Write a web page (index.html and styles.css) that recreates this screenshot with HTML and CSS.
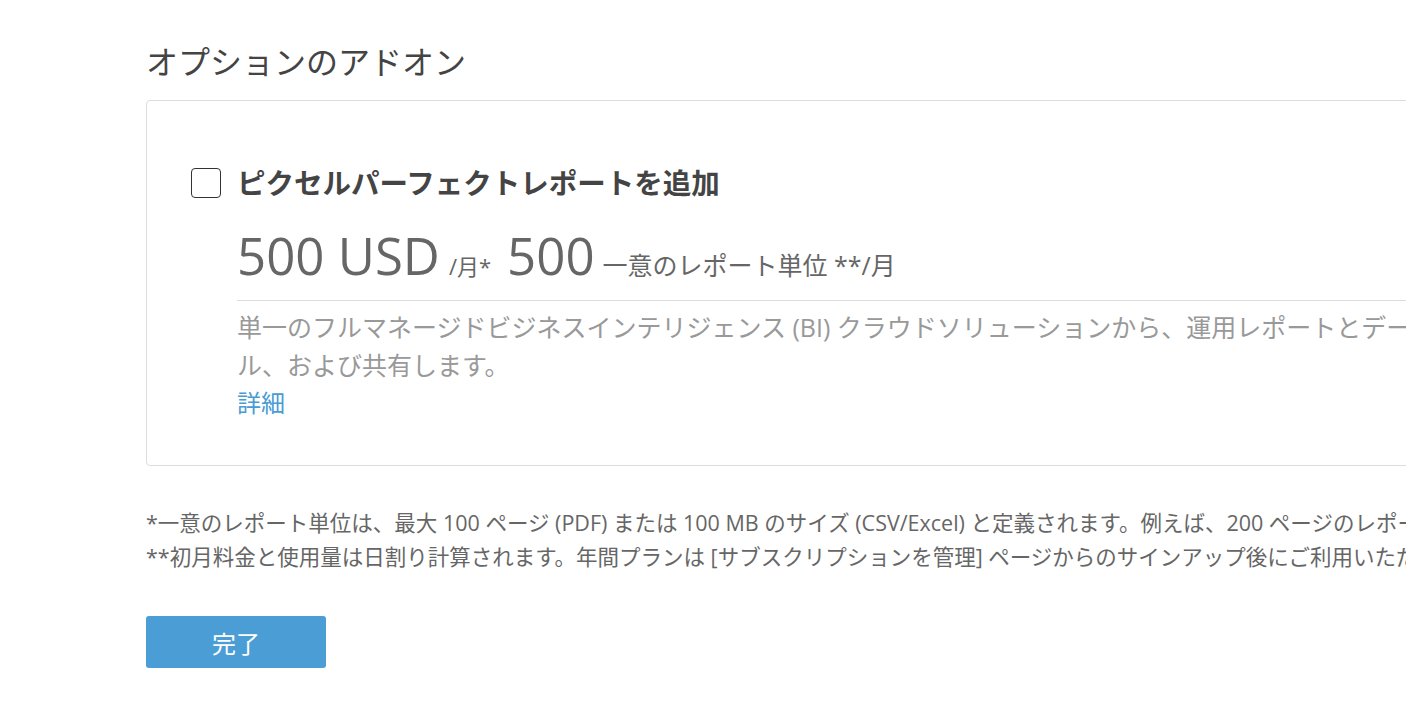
FILE: index.html
```html
<!DOCTYPE html>
<html lang="ja">
<head>
    <meta charset="UTF-8">
    <meta name="viewport" content="width=device-width, initial-scale=1.0">
    <title>オプションのアドオン</title>
    <link rel="stylesheet" href="styles.css">
</head>
<body>

<div class="page">
    <h1>オプションのアドオン</h1>

    <div class="card">
        <label class="option">
            <input type="checkbox" class="check">
            <span class="option-title">ピクセルパーフェクトレポートを追加</span>
        </label>

        <div class="details">
            <div class="price">
                <span class="amount">500 USD</span>
                <span class="unit">/月*</span>
                <span class="amount">500</span>
                <span class="unit-text">一意のレポート単位 **/月</span>
            </div>

            <p class="desc">
                単一のフルマネージドビジネスインテリジェンス (BI) クラウドソリューションから、運用レポートとデータビジュアライゼーションを作成、スケジュー<br>ル、および共有します。
            </p>
            <a href="#" class="more">詳細</a>
        </div>
    </div>

    <div class="notes">
        <p>*一意のレポート単位は、最大 100 ページ (PDF) または 100 MB のサイズ (CSV/Excel) と定義されます。例えば、200 ページのレポートは 2 つの一意のレポート単位としてカウントされます。</p>
        <p>**初月料金と使用量は日割り計算されます。年間プランは [サブスクリプションを管理] ページからのサインアップ後にご利用いただけます。</p>
    </div>

    <button class="done">完了</button>
</div>

</body>
</html>
```

FILE: styles.css
```css
html, body {
    margin: 0;
    overflow: hidden;
    background-color: #fff;
}

body {
    font-family: "Open Sans", "Noto Sans CJK JP", sans-serif;
    color: #444;
}

.page {
    width: 2200px;
    padding: 40px 0 0 146px;
}

h1 {
    font-size: 32px;
    font-weight: 400;
    line-height: 44px;
    margin: 0 0 16px;
    color: #444;
}

.card {
    border: 1px solid #ddd;
    border-radius: 4px;
    padding: 67px 44px 43px;
}

.option {
    display: flex;
    align-items: center;
    gap: 16px;
}

.check {
    appearance: none;
    width: 30px;
    height: 30px;
    margin: 0;
    border: 1.5px solid #333;
    border-radius: 4px;
    background: #fff;
}

.option-title {
    font-size: 28.5px;
    font-weight: 700;
    line-height: 30px;
    color: #444;
}

.details {
    margin-left: 46px;
}

.price {
    display: flex;
    align-items: baseline;
    margin-top: 28px;
    padding-bottom: 16px;
    border-bottom: 1px solid #ddd;
    color: #666;
}

.amount {
    font-size: 51px;
    line-height: 58px;
}

.unit {
    font-size: 22px;
    margin: 0 16px 0 9px;
}

.unit-text {
    font-size: 25px;
    margin-left: 8px;
}

.desc {
    margin: 7px 0 0;
    font-size: 25px;
    line-height: 38px;
    color: #999;
}

.more {
    display: inline-block;
    font-size: 24px;
    line-height: 38px;
    color: #4a9bd4;
    text-decoration: none;
}

.notes {
    margin-top: 40px;
}

.notes p {
    margin: 0;
    font-size: 21.5px;
    line-height: 34px;
    color: #666;
    white-space: nowrap;
}

.done {
    margin-top: 42px;
    width: 180px;
    height: 52px;
    border: none;
    border-radius: 3px;
    background-color: #4b9dd5;
    color: #fff;
    font-family: inherit;
    font-size: 24px;
    cursor: pointer;
}
```
